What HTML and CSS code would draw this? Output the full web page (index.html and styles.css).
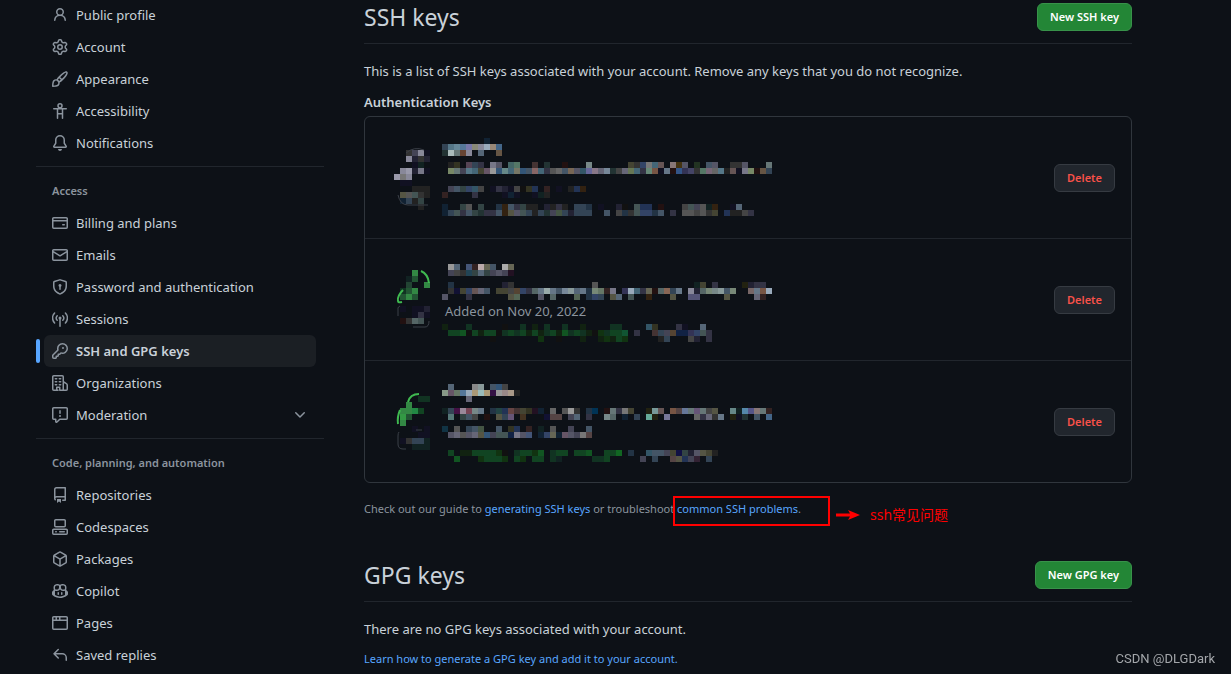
FILE: index.html
```
<!DOCTYPE html>
<html lang="en">
<head>
    <meta charset="UTF-8">
    <meta name="viewport" content="width=device-width, initial-scale=1.0">
    <title>SSH and GPG keys</title>
    <link rel="stylesheet" href="styles.css">
</head>
<body>

    <div class="layout">
        <nav class="sidebar" aria-label="User settings">
            <ul class="nav-list">
                <li><a href="#" class="nav-link">
                    <svg class="icon" viewBox="0 0 16 16"><path d="M10.561 8.073a6.005 6.005 0 0 1 3.432 5.142.75.75 0 1 1-1.498.07 4.5 4.5 0 0 0-8.99 0 .75.75 0 0 1-1.498-.07 6.004 6.004 0 0 1 3.431-5.142 3.999 3.999 0 1 1 5.123 0ZM10.5 5a2.5 2.5 0 1 0-5 0 2.5 2.5 0 0 0 5 0Z"/></svg>
                    <span>Public profile</span></a></li>
                <li><a href="#" class="nav-link">
                    <svg class="icon" viewBox="0 0 16 16"><path d="M8 0a8.2 8.2 0 0 1 .701.031C9.444.095 9.99.645 10.16 1.29l.288 1.107c.018.066.079.158.212.224.231.114.454.243.668.386.123.082.233.09.299.071l1.103-.303c.644-.176 1.392.021 1.82.63.27.385.506.792.704 1.218.315.675.111 1.422-.364 1.891l-.814.806c-.049.048-.098.147-.088.294.016.257.016.515 0 .772-.01.147.038.246.088.294l.814.806c.475.469.679 1.216.364 1.891a7.977 7.977 0 0 1-.704 1.217c-.428.61-1.176.807-1.82.63l-1.102-.302c-.067-.019-.177-.011-.3.071a5.909 5.909 0 0 1-.668.386c-.133.066-.194.158-.211.224l-.29 1.106c-.168.646-.715 1.196-1.458 1.26a8.006 8.006 0 0 1-1.402 0c-.743-.064-1.289-.614-1.458-1.26l-.289-1.106c-.018-.066-.079-.158-.212-.224a5.738 5.738 0 0 1-.668-.386c-.123-.082-.233-.09-.299-.071l-1.103.303c-.644.176-1.392-.021-1.82-.63a8.12 8.12 0 0 1-.704-1.218c-.315-.675-.111-1.422.363-1.891l.815-.806c.05-.048.098-.147.088-.294a6.214 6.214 0 0 1 0-.772c.01-.147-.038-.246-.088-.294l-.815-.806C.635 6.045.431 5.298.746 4.623a7.92 7.92 0 0 1 .704-1.217c.428-.61 1.176-.807 1.82-.63l1.102.302c.067.019.177.011.3-.071.214-.143.437-.272.668-.386.133-.066.194-.158.211-.224l.29-1.106C6.009.645 6.556.095 7.299.03 7.53.01 7.764 0 8 0Zm-.571 1.525c-.036.003-.108.036-.137.146l-.289 1.105c-.147.561-.549.967-.998 1.189-.173.086-.34.183-.5.29-.417.278-.97.423-1.529.27l-1.103-.303c-.109-.03-.175.016-.195.045-.22.312-.412.644-.573.99-.014.031-.021.11.059.19l.815.806c.411.406.562.957.53 1.456a4.709 4.709 0 0 0 0 .582c.032.499-.119 1.05-.53 1.456l-.815.806c-.081.08-.073.159-.059.19.162.346.353.677.573.989.02.03.085.076.195.046l1.102-.303c.56-.153 1.113-.008 1.53.27.161.107.328.204.501.29.447.222.85.629.997 1.189l.289 1.105c.029.109.101.143.137.146a6.6 6.6 0 0 0 1.142 0c.036-.003.108-.036.137-.146l.289-1.105c.147-.561.549-.967.998-1.189.173-.086.34-.183.5-.29.417-.278.97-.423 1.529-.27l1.103.303c.109.029.175-.016.195-.045.22-.313.411-.644.573-.99.014-.031.021-.11-.059-.19l-.815-.806c-.411-.406-.562-.957-.53-1.456a4.709 4.709 0 0 0 0-.582c-.032-.499.119-1.05.53-1.456l.815-.806c.081-.08.073-.159.059-.19a6.464 6.464 0 0 0-.573-.989c-.02-.03-.085-.076-.195-.046l-1.102.303c-.56.153-1.113.008-1.53-.27a4.44 4.44 0 0 0-.501-.29c-.447-.222-.85-.629-.997-1.189l-.289-1.105c-.029-.11-.101-.143-.137-.146a6.6 6.6 0 0 0-1.142 0ZM11 8a3 3 0 1 1-6 0 3 3 0 0 1 6 0ZM9.5 8a1.5 1.5 0 1 0-3.001.001A1.5 1.5 0 0 0 9.5 8Z"/></svg>
                    <span>Account</span></a></li>
                <li><a href="#" class="nav-link">
                    <svg class="icon" viewBox="0 0 16 16"><path d="M11.134 1.535c.7-.509 1.416-.942 2.076-1.155.649-.21 1.463-.267 2.069.34.603.601.568 1.411.368 2.07-.202.668-.624 1.39-1.125 2.096-1.011 1.424-2.496 2.987-3.775 4.249-1.098 1.084-2.132 1.839-3.04 2.3a3.744 3.744 0 0 1-1.055 3.217c-.431.431-1.065.691-1.657.861-.614.177-1.294.287-1.914.357A21.151 21.151 0 0 1 .797 16H.743a.75.75 0 0 1-.743-.742v-.054a21.25 21.25 0 0 1 .13-2.284c.067-.647.187-1.287.358-1.914.17-.591.43-1.226.86-1.657a3.746 3.746 0 0 1 3.227-1.054c.466-.893 1.225-1.907 2.314-2.982 1.271-1.255 2.833-2.75 4.245-3.777ZM1.62 13.089c-.051.464-.086.929-.104 1.395.466-.018.932-.053 1.396-.104a10.511 10.511 0 0 0 1.668-.309c.526-.151.856-.325 1.011-.48a2.25 2.25 0 1 0-3.182-3.182c-.155.155-.329.485-.48 1.01a10.515 10.515 0 0 0-.309 1.67Zm10.396-10.34c-1.224.89-2.605 2.189-3.822 3.384l1.718 1.718c1.21-1.205 2.51-2.597 3.387-3.833.47-.662.78-1.227.912-1.662.134-.444.032-.551.009-.575h-.001V1.78c-.014-.014-.113-.113-.548.027-.432.14-.995.462-1.655.942Zm-4.832 7.266-.001.001a9.859 9.859 0 0 0 1.63-1.142L7.155 7.216a9.7 9.7 0 0 0-1.161 1.607c.482.302.889.71 1.19 1.192Z"/></svg>
                    <span>Appearance</span></a></li>
                <li><a href="#" class="nav-link">
                    <svg class="icon icon-line" viewBox="0 0 16 16"><circle cx="8" cy="2.75" r="2"/><path d="M1.75 5.75h12.5M5.5 5.75v9.5M10.5 5.75v9.5M5.5 10.75h5"/></svg>
                    <span>Accessibility</span></a></li>
                <li><a href="#" class="nav-link">
                    <svg class="icon" viewBox="0 0 16 16"><path d="M8 16a2 2 0 0 0 1.985-1.75c.017-.137-.097-.25-.235-.25h-3.5c-.138 0-.252.113-.235.25A2 2 0 0 0 8 16ZM3 5a5 5 0 0 1 10 0v2.947c0 .05.015.098.042.139l1.703 2.555A1.519 1.519 0 0 1 13.482 13H2.518a1.516 1.516 0 0 1-1.263-2.36l1.703-2.554A.255.255 0 0 0 3 7.947Zm5-3.5A3.5 3.5 0 0 0 4.5 5v2.947c0 .346-.102.683-.294.97l-1.703 2.556a.017.017 0 0 0-.003.01l.001.006c0 .002.002.004.004.006l.006.004.007.001h10.964l.007-.001.006-.004.004-.006.001-.007a.017.017 0 0 0-.003-.01l-1.703-2.554a1.745 1.745 0 0 1-.294-.97V5A3.5 3.5 0 0 0 8 1.5Z"/></svg>
                    <span>Notifications</span></a></li>
            </ul>

            <h2 class="nav-title">Access</h2>
            <ul class="nav-list">
                <li><a href="#" class="nav-link">
                    <svg class="icon" viewBox="0 0 16 16"><path d="M10.75 9a.75.75 0 0 0 0 1.5h1.5a.75.75 0 0 0 0-1.5h-1.5Z"/><path d="M0 3.75C0 2.784.784 2 1.75 2h12.5c.966 0 1.75.784 1.75 1.75v8.5A1.75 1.75 0 0 1 14.25 14H1.75A1.75 1.75 0 0 1 0 12.25ZM14.5 6.5h-13v5.75c0 .138.112.25.25.25h12.5a.25.25 0 0 0 .25-.25Zm0-2.75a.25.25 0 0 0-.25-.25H1.75a.25.25 0 0 0-.25.25V5h13Z"/></svg>
                    <span>Billing and plans</span></a></li>
                <li><a href="#" class="nav-link">
                    <svg class="icon" viewBox="0 0 16 16"><path d="M1.75 2h12.5c.966 0 1.75.784 1.75 1.75v8.5A1.75 1.75 0 0 1 14.25 14H1.75A1.75 1.75 0 0 1 0 12.25v-8.5C0 2.784.784 2 1.75 2ZM1.5 12.251c0 .138.112.25.25.25h12.5a.25.25 0 0 0 .25-.25V5.809L8.38 9.397a.75.75 0 0 1-.76 0L1.5 5.809v6.442Zm13-8.181v-.32a.25.25 0 0 0-.25-.25H1.75a.25.25 0 0 0-.25.25v.32L8 7.88Z"/></svg>
                    <span>Emails</span></a></li>
                <li><a href="#" class="nav-link">
                    <svg class="icon" viewBox="0 0 16 16"><path d="m8.533.133 5.25 1.68A1.75 1.75 0 0 1 15 3.48V7c0 1.566-.32 3.182-1.303 4.682-.983 1.498-2.585 2.813-5.032 3.855a1.697 1.697 0 0 1-1.33 0c-2.447-1.042-4.049-2.357-5.032-3.855C1.32 10.182 1 8.566 1 7V3.48a1.755 1.755 0 0 1 1.217-1.667l5.25-1.68a1.748 1.748 0 0 1 1.066 0Zm-.61 1.429.001.001-5.25 1.68a.251.251 0 0 0-.174.237V7c0 1.36.275 2.666 1.057 3.859.784 1.194 2.121 2.342 4.366 3.298a.196.196 0 0 0 .154 0c2.245-.957 3.582-2.103 4.366-3.297C13.225 9.666 13.5 8.358 13.5 7V3.48a.25.25 0 0 0-.174-.238l-5.25-1.68a.25.25 0 0 0-.153 0ZM9.5 6.5c0 .536-.286 1.032-.75 1.3v2.45a.75.75 0 0 1-1.5 0V7.8A1.5 1.5 0 1 1 9.5 6.5Z"/></svg>
                    <span>Password and authentication</span></a></li>
                <li><a href="#" class="nav-link">
                    <svg class="icon icon-line" viewBox="0 0 16 16"><path d="M8 7.5v7.75M5.2 9.3a3.4 3.4 0 0 1 0-4.6M10.8 9.3a3.4 3.4 0 0 0 0-4.6M2.6 12a7.2 7.2 0 0 1 0-10M13.4 12a7.2 7.2 0 0 0 0-10"/><circle class="dot" cx="8" cy="7" r="1.5"/></svg>
                    <span>Sessions</span></a></li>
                <li class="current"><a href="#" class="nav-link" aria-current="page">
                    <svg class="icon" viewBox="0 0 16 16"><path d="M10.5 0a5.499 5.499 0 1 1-1.288 10.848l-.932.932a.749.749 0 0 1-.53.22H7v.75a.749.749 0 0 1-.22.53l-.5.5a.749.749 0 0 1-.53.22H5v.75a.749.749 0 0 1-.22.53l-.5.5a.749.749 0 0 1-.53.22h-2A1.75 1.75 0 0 1 0 14.25v-2c0-.199.079-.389.22-.53l4.932-4.932A5.5 5.5 0 0 1 10.5 0Zm-4 5.5c-.001.431.069.86.205 1.269a.75.75 0 0 1-.181.768L1.5 12.56v1.69c0 .138.112.25.25.25h1.69l.06-.06v-1.19a.75.75 0 0 1 .75-.75h1.19l.06-.06v-1.19a.75.75 0 0 1 .75-.75h1.19l1.023-1.025a.75.75 0 0 1 .768-.18A4 4 0 1 0 6.5 5.5ZM11 6a1 1 0 1 1 0-2 1 1 0 0 1 0 2Z"/></svg>
                    <span>SSH and GPG keys</span></a></li>
                <li><a href="#" class="nav-link">
                    <svg class="icon icon-line" viewBox="0 0 16 16"><path d="M6 15.25H1.75a1 1 0 0 1-1-1V1.75a1 1 0 0 1 1-1h8.5a1 1 0 0 1 1 1v13.5H8M4.75 15.25v-3h3v3M11.25 6.75l2.8 1.6q1.2.6 1.2 1.6v4.3a1 1 0 0 1-1 1h-3"/><path d="M3.3 3.75h1.4M7.3 3.75h1.4M3.3 6.75h1.4M7.3 6.75h1.4M3.3 9.75h1.4M7.3 9.75h1.4"/></svg>
                    <span>Organizations</span></a></li>
                <li><a href="#" class="nav-link">
                    <svg class="icon" viewBox="0 0 16 16"><path d="M0 1.75C0 .784.784 0 1.75 0h12.5C15.216 0 16 .784 16 1.75v9.5A1.75 1.75 0 0 1 14.25 13H8.06l-2.573 2.573A1.458 1.458 0 0 1 3 14.543V13H1.75A1.75 1.75 0 0 1 0 11.25Zm1.75-.25a.25.25 0 0 0-.25.25v9.5c0 .138.112.25.25.25h2a.75.75 0 0 1 .75.75v2.19l2.72-2.72a.749.749 0 0 1 .53-.22h6.5a.25.25 0 0 0 .25-.25v-9.5a.25.25 0 0 0-.25-.25Zm7 2.25v2.5a.75.75 0 0 1-1.5 0v-2.5a.75.75 0 0 1 1.5 0ZM9 9a1 1 0 1 1-2 0 1 1 0 0 1 2 0Z"/></svg>
                    <span>Moderation</span>
                    <svg class="icon chevron" viewBox="0 0 16 16"><path d="M12.78 5.22a.749.749 0 0 1 0 1.06l-4.25 4.25a.749.749 0 0 1-1.06 0L3.22 6.28a.749.749 0 1 1 1.06-1.06L8 8.939l3.72-3.719a.749.749 0 0 1 1.06 0Z"/></svg></a></li>
            </ul>

            <h2 class="nav-title">Code, planning, and automation</h2>
            <ul class="nav-list">
                <li><a href="#" class="nav-link">
                    <svg class="icon" viewBox="0 0 16 16"><path d="M2 2.5A2.5 2.5 0 0 1 4.5 0h8.75a.75.75 0 0 1 .75.75v12.5a.75.75 0 0 1-.75.75h-2.5a.75.75 0 0 1 0-1.5h1.75v-2h-8a1 1 0 0 0-.714 1.7.75.75 0 1 1-1.072 1.05A2.495 2.495 0 0 1 2 11.5Zm10.5-1h-8a1 1 0 0 0-1 1v6.708A2.486 2.486 0 0 1 4.5 9h8ZM5 12.25a.25.25 0 0 1 .25-.25h3.5a.25.25 0 0 1 .25.25v3.25a.25.25 0 0 1-.4.2l-1.45-1.087a.249.249 0 0 0-.3 0L5.4 15.7a.25.25 0 0 1-.4-.2Z"/></svg>
                    <span>Repositories</span></a></li>
                <li><a href="#" class="nav-link">
                    <svg class="icon" viewBox="0 0 16 16"><path d="M0 11.25c0-.966.784-1.75 1.75-1.75h12.5c.966 0 1.75.784 1.75 1.75v3A1.75 1.75 0 0 1 14.25 16H1.75A1.75 1.75 0 0 1 0 14.25Zm2-9.5C2 .784 2.784 0 3.75 0h8.5C13.216 0 14 .784 14 1.75v5a1.75 1.75 0 0 1-1.75 1.75h-8.5A1.75 1.75 0 0 1 2 6.75Zm1.75-.25a.25.25 0 0 0-.25.25v5c0 .138.112.25.25.25h8.5a.25.25 0 0 0 .25-.25v-5a.25.25 0 0 0-.25-.25Zm-2 9.5a.25.25 0 0 0-.25.25v3c0 .138.112.25.25.25h12.5a.25.25 0 0 0 .25-.25v-3a.25.25 0 0 0-.25-.25Z"/><path d="M7 12.75a.75.75 0 0 1 .75-.75h4.5a.75.75 0 0 1 0 1.5h-4.5a.75.75 0 0 1-.75-.75Zm-4 0a.75.75 0 0 1 .75-.75h.5a.75.75 0 0 1 0 1.5h-.5a.75.75 0 0 1-.75-.75Z"/></svg>
                    <span>Codespaces</span></a></li>
                <li><a href="#" class="nav-link">
                    <svg class="icon" viewBox="0 0 16 16"><path d="m8.878.392 5.25 3.045c.54.314.872.89.872 1.514v6.098a1.75 1.75 0 0 1-.872 1.514l-5.25 3.045a1.75 1.75 0 0 1-1.756 0l-5.25-3.045A1.75 1.75 0 0 1 1 11.049V4.951c0-.624.332-1.201.872-1.514L7.122.392a1.75 1.75 0 0 1 1.756 0ZM7.875 1.69l-4.63 2.685L8 7.133l4.755-2.758-4.63-2.685a.248.248 0 0 0-.25 0ZM2.5 5.677v5.372c0 .09.047.171.125.216l4.625 2.683V8.432Zm6.25 8.271 4.625-2.683a.25.25 0 0 0 .125-.216V5.677L8.75 8.432Z"/></svg>
                    <span>Packages</span></a></li>
                <li><a href="#" class="nav-link">
                    <svg class="icon" viewBox="0 0 16 16"><path d="M7.998 15.035c-4.562 0-7.873-2.914-7.998-3.749V9.338c.085-.628.677-1.686 1.588-2.065.013-.07.024-.143.036-.218.029-.183.06-.384.126-.612-.201-.508-.254-1.084-.254-1.656 0-.87.128-1.769.693-2.484.579-.733 1.494-1.124 2.724-1.261 1.206-.134 2.262.034 2.944.765.05.053.096.108.139.165.044-.057.094-.112.143-.165.682-.731 1.738-.899 2.944-.765 1.23.137 2.145.528 2.724 1.261.566.715.693 1.614.693 2.484 0 .572-.053 1.148-.254 1.656.066.228.098.429.126.612.012.076.024.148.037.218.924.385 1.522 1.471 1.591 2.095v1.872c0 .766-3.351 3.795-8.002 3.795Zm0-1.485c2.28 0 4.584-1.11 5.002-1.433V7.862l-.023-.116c-.49.21-1.075.291-1.727.291-1.146 0-2.059-.327-2.71-.991A3.222 3.222 0 0 1 8 6.303a3.24 3.24 0 0 1-.544.743c-.65.664-1.563.991-2.71.991-.652 0-1.236-.081-1.727-.291l-.023.116v4.255c.419.323 2.722 1.433 5.002 1.433ZM6.762 2.83c-.193-.206-.637-.413-1.682-.297-1.019.113-1.479.404-1.713.7-.247.312-.369.789-.369 1.554 0 .793.129 1.171.308 1.371.162.181.519.379 1.442.379.853 0 1.339-.235 1.638-.54.315-.322.527-.827.617-1.553.117-.935-.037-1.395-.241-1.614Zm4.155-.297c-1.044-.116-1.488.091-1.681.297-.204.219-.359.679-.242 1.614.091.726.303 1.231.618 1.553.299.305.784.54 1.638.54.922 0 1.28-.198 1.442-.379.179-.2.308-.578.308-1.371 0-.765-.123-1.242-.37-1.554-.233-.296-.693-.587-1.713-.7Z"/><path d="M6.25 9.037a.75.75 0 0 1 .75.75v1.501a.75.75 0 0 1-1.5 0V9.787a.75.75 0 0 1 .75-.75Zm4.25.75v1.501a.75.75 0 0 1-1.5 0V9.787a.75.75 0 0 1 1.5 0Z"/></svg>
                    <span>Copilot</span></a></li>
                <li><a href="#" class="nav-link">
                    <svg class="icon" viewBox="0 0 16 16"><path d="M0 2.75C0 1.784.784 1 1.75 1h12.5c.966 0 1.75.784 1.75 1.75v10.5A1.75 1.75 0 0 1 14.25 15H1.75A1.75 1.75 0 0 1 0 13.25ZM14.5 6h-13v7.25c0 .138.112.25.25.25h12.5a.25.25 0 0 0 .25-.25Zm-6-3.5v2h6V2.75a.25.25 0 0 0-.25-.25ZM5 2.5v2h2v-2Zm-3.25 0a.25.25 0 0 0-.25.25V4.5h2v-2Z"/></svg>
                    <span>Pages</span></a></li>
                <li><a href="#" class="nav-link">
                    <svg class="icon" viewBox="0 0 16 16"><path d="M6.78 1.97a.75.75 0 0 1 0 1.06L3.81 6h6.44A4.75 4.75 0 0 1 15 10.75v2.5a.75.75 0 0 1-1.5 0v-2.5a3.25 3.25 0 0 0-3.25-3.25H3.81l2.97 2.97a.749.749 0 0 1-.326 1.275.749.749 0 0 1-.734-.215L1.47 7.28a.75.75 0 0 1 0-1.06l4.25-4.25a.75.75 0 0 1 1.06 0Z"/></svg>
                    <span>Saved replies</span></a></li>
            </ul>
        </nav>

        <main class="content">
            <section>
                <div class="subhead">
                    <h1>SSH keys</h1>
                    <button type="button" class="btn btn-primary">New SSH key</button>
                </div>
                <p class="text">This is a list of SSH keys associated with your account. Remove any keys that you do not recognize.</p>
                <h3 class="list-title">Authentication Keys</h3>
                <ul class="key-list">
                    <li class="key">
                        <div class="key-info">
                            <svg class="mosaic" id="key1" viewBox="0 0 384 91">
                                <g class="cells"></g>
                                <path class="gray" d="M12 21Q20 14 30 18M4 63Q6 73 14 73H34"/>
                            </svg>
                        </div>
                        <button type="button" class="btn btn-danger">Delete</button>
                    </li>
                    <li class="key">
                        <div class="key-info">
                            <svg class="mosaic" id="key2" viewBox="0 2 384 91">
                                <g class="cells"></g>
                                <path class="green" d="M27 19Q34 22 35 31M9 38Q3 44 4 49Q4 51 8 50"/>
                                <path class="gray" d="M4 64V56Q4 55 6 54M19 75H31Q35 75 35 69"/>
                            </svg>
                            <span class="added">Added on Nov 20, 2022</span>
                        </div>
                        <button type="button" class="btn btn-danger">Delete</button>
                    </li>
                    <li class="key">
                        <div class="key-info">
                            <svg class="mosaic" id="key3" viewBox="0 4 384 91">
                                <g class="cells"></g>
                                <path class="green" d="M25 22Q16 22 14 30M6 38Q3 45 4 52"/>
                                <path class="gray" d="M5 60Q4 61 4 64V72Q4 77 9 77H12M22 58H28"/>
                            </svg>
                        </div>
                        <button type="button" class="btn btn-danger">Delete</button>
                    </li>
                </ul>
                <p class="help">
                    Check out our guide to <a href="#">generating SSH keys</a> or troubleshoot <a href="#">common SSH problems</a>.
                    <span class="callout"></span>
                    <span class="callout-note" lang="zh">
                        <svg class="arrow" viewBox="0 0 24 12"><path d="M0 4.6h14L12 1l12 5-12 5 2-3.6H0Z"/></svg>
                        ssh常见问题
                    </span>
                </p>
            </section>

            <section class="gpg">
                <div class="subhead">
                    <h1>GPG keys</h1>
                    <button type="button" class="btn btn-primary">New GPG key</button>
                </div>
                <p class="text">There are no GPG keys associated with your account.</p>
                <p class="learn">Learn how to <a href="#">generate a GPG key and add it to your account</a>.</p>
            </section>
        </main>
    </div>

    <div class="watermark">CSDN @DLGDark</div>

    <script src="mosaic.js"></script>
</body>
</html>
```

FILE: styles.css
```
* {
    box-sizing: border-box;
}
body {
    margin: 0;
    background-color: #0d1117;
    color: #c9d1d9;
    font-family: "Segoe UI", "Noto Sans", "Noto Sans CJK SC", sans-serif;
    font-size: 13px;
    line-height: 22px;
    overflow: hidden;
}
h1, h2, h3, p, ul {
    margin: 0;
    padding: 0;
}
ul {
    list-style: none;
}
a {
    color: #58a6ff;
    text-decoration: none;
}
a:hover {
    text-decoration: underline;
}
.layout {
    display: flex;
    gap: 40px;
    margin-top: -1px;
    padding: 0 99px 0 36px;
}

/* sidebar */
.sidebar {
    flex: 0 0 288px;
}
.nav-list {
    padding: 0 8px;
}
.nav-list li {
    position: relative;
}
.nav-link {
    display: flex;
    align-items: center;
    gap: 8px;
    height: 32px;
    padding: 0 8px;
    border-radius: 6px;
    color: #c9d1d9;
}
.current .nav-link {
    background-color: #1b1f24;
    font-weight: 600;
}
.current::before {
    content: "";
    position: absolute;
    left: -8px;
    top: 4px;
    width: 4px;
    height: 24px;
    border-radius: 6px;
    background-color: #58a6ff;
}
.nav-title {
    margin-top: 7px;
    padding: 8px 16px 0;
    border-top: 1px solid #21262d;
    color: #8b949e;
    font-size: 11px;
    font-weight: 600;
    line-height: 32px;
}
.icon {
    flex: none;
    width: 16px;
    height: 16px;
    fill: #8b949e;
}
.icon-line {
    fill: none;
    stroke: #8b949e;
    stroke-width: 1.5;
    stroke-linecap: round;
    stroke-linejoin: round;
}
.dot {
    fill: #8b949e;
    stroke: none;
}
.chevron {
    margin-left: auto;
}

/* main column */
.content {
    flex: 1;
    min-width: 0;
}
.subhead {
    display: flex;
    justify-content: space-between;
    align-items: center;
    padding: 4px 0 12px;
    border-bottom: 1px solid #21262d;
}
.subhead h1 {
    font-size: 23px;
    font-weight: 400;
    line-height: 28px;
}
.text {
    margin-top: 16px;
}
.list-title {
    margin: 9px 0 3px;
    font-size: 13px;
    font-weight: 600;
}
.btn {
    height: 28px;
    padding: 0 12px;
    border: 1px solid #363b42;
    border-radius: 6px;
    font-family: inherit;
    font-size: 11px;
    font-weight: 600;
    line-height: 20px;
    cursor: pointer;
}
.btn-primary {
    background-color: #238636;
    border-color: #38924a;
    color: #fff;
}
.btn-primary:hover {
    background-color: #2ea043;
}
.btn-danger {
    background-color: #21262d;
    color: #f85149;
}
.key-list {
    border: 1px solid #30363d;
    border-radius: 6px;
}
.key {
    display: flex;
    justify-content: space-between;
    align-items: center;
    padding: 15px 16px 15px 29px;
}
.key + .key {
    border-top: 1px solid #21262d;
}
.key-info {
    position: relative;
}
.mosaic {
    display: block;
    width: 384px;
    height: 91px;
    fill: none;
}
.cells {
    shape-rendering: crispEdges;
}
.gray {
    stroke: #3b4048;
}
.green {
    stroke: #3fb950;
    stroke-width: 2;
}
.added {
    position: absolute;
    left: 51px;
    top: 46px;
    color: #8b949e;
}
.help,
.learn {
    color: #8b949e;
    font-size: 11px;
    line-height: 18px;
}
.help {
    position: relative;
    margin-top: 17px;
}
.learn {
    margin-top: 10px;
}
.learn a,
.learn {
    color: #58a6ff;
}

/* red mark over the help line */
.callout {
    position: absolute;
    left: 309px;
    top: -4px;
    width: 157px;
    height: 30px;
    border: 2px solid #f00;
}
.callout-note {
    position: absolute;
    left: 472px;
    top: 5px;
    display: flex;
    align-items: center;
    gap: 10px;
    color: #f00;
    font-size: 14px;
    line-height: 20px;
}
.arrow {
    width: 24px;
    height: 12px;
    fill: #f00;
}
.gpg {
    margin-top: 39px;
}
.watermark {
    position: fixed;
    right: 16px;
    bottom: 5px;
    color: #a3a6aa;
    font-family: Roboto, sans-serif;
    font-size: 13px;
    line-height: 20px;
}
```

FILE: mosaic.js
```
// Blurred key details, drawn as 6px cells.
// Each line: [row, first column, colours], "_n" skips n cells.
const CELL = 6;

const mosaics = {
    key1: [
        [3, 2, "333 445 889 112"],
        [4, 2, "889 223 333 223"],
        [5, 3, "112 122"],
        [6, 1, "889 99a 223 778 112"],
        [7, 0, "99a 777 889"],
        [8, 1, "112 112"],
        [9, 3, "222 222 222"],
        [10, 1, "554 555 455 333 222"],
        [11, 1, "123 345 222 344"],
        [12, 4, "222"],
        [1, 15, "123"],
        [2, 8, "345 578 689 579 77a 887 889 9ab 987 468"],
        [3, 8, "233 abb 677 643 889 _1 567 _2 654"],
        [5, 9, "222 332 _1 545 345 334 _1 778 556 _1 466 576 _2 433 _1 233 _2 211 _3 788 _6 443 333 346 777 467 655 _1 877 431 556 _1 232 _1 456 556 _2 333 333 556 _3 677"],
        [6, 9, "786 677 445 578 467 443 656 999 357 688 467 776 357 456 866 467 334 555 666 456 765 556 356 669 878 667 789 233 444 667 675 467 334 687 754 112 678 211 358 335 446 333 576 767 666 578 222 655 112 778 786 211 654 345"],
        [9, 9, "445 456 344 346 356 444 _1 112 334 223 112 444 111 332 235 _1 322 _1 112 _1 222 235 321"],
        [10, 8, "322 _4 334 _4 112 123 112 _2 112 122 222"],
        [12, 8, "123 _2 344 555 _1 344 _2 234 321 456 334 344 222 222 _1 223 222 334 222 _1 345 345 234 _1 112 _2 223 111 _1 455 235 235 _1 211 _3 444 455 445 555 122 321 _2 112 567"],
        [13, 8, "123 345 455 334 456 344 233 334 334 456 321 554 556 455 345 222 345 233 445 454 345 223 345 345 345 _2 456 _1 444 234 333 455 346 346 234 456 _1 334 _1 555 555 444 555 333 443 _1 235 222 222 444 334"]
    ],
    key2: [
        [3, 3, "384"],
        [4, 2, "122 253"],
        [5, 2, "243 _2 384"],
        [6, 1, "132 253 384"],
        [7, 1, "253 384 253"],
        [9, 1, "112 _1 112 112 223"],
        [10, 3, "112 334 112"],
        [11, 1, "211 333 566 455"],
        [2, 9, "999 567 _1 457 322 baa 665 456 _1 aaa 665"],
        [3, 9, "445 444 333 245 344 567 344 445 556 445 212"],
        [5, 9, "234 _8 223 333 _13 555 _16 122 443 _1 334 _4 221 223 334 334"],
        [6, 9, "333 113 443 346 655 667 456 _1 443 443 444 543 346 334 566 678 9aa 678 456 789 899 567 678 234 787 676 322 778 _1 335 9ab 467 334 665 211 566 865 345 678 _1 889 223 566 787 788 899 456 787 _2 766 678 754 9ab"],
        [7, 8, "556 _3 334 _6 554 565 _3 556 _1 566 _3 565 _1 234 346 345 _1 554 567 _1 455 _2 321 _3 554 _2 557 557 _4 554 _4 667 322"],
        [12, 8, "121 _3 132 _5 111 _2 132 _1 121 _1 132 _2 132 _2 121 _4 132 132 _4 356 332 _3 334 112 _2 567"],
        [13, 9, "142 142 152 111 142 121 142 142 111 132 142 132 142 121 142 121 132 142 121 152 132 142 132 121 111 131 132 142 142 153 _1 334 _2 433 345 445 543 124 124 335 346 455 334"],
        [14, 16, "111 _7 131 _2 111 _3 121 _2 121 131 121 142 131 _5 222 345 _3 444 223 _1 334"]
    ],
    key3: [
        [4, 4, "132 132"],
        [5, 2, "384"],
        [6, 1, "384 384 284 142"],
        [7, 1, "394 253"],
        [8, 1, "384"],
        [9, 3, "112 _1 112"],
        [10, 4, "112 112"],
        [11, 1, "112 333 345 345 122"],
        [12, 3, "122 122 122"],
        [2, 9, "567 _3 888 899 _1 456 357 444"],
        [3, 8, "898 656 676 579 9ab a97 9bb a97 314 999 988 a98 222"],
        [4, 12, "667"],
        [6, 8, "122 345 414 989 745 788 678 _1 234 244 235 644 433 443 332 212 123 _1 666 _1 555 999 333 _1 234 035 _1 211 677 334 777 443 _2 221 799 655 _1 754 544 679 677 657 677 444 554 _2 688 122 58a 558 877 677 322"],
        [7, 9, "577 _1 344 456 444 _1 211 _1 554 345 657 _1 432 _3 113 544 544 _1 445 567 _1 334 _2 788 566 _1 123 _1 345 _1 6a9 221 _1 779 _4 666 334 667 333 678 _1 221 112 233 _1 456 _1 468"],
        [9, 8, "134 _1 555 _1 345 456 454 _2 456 _1 332 235 _1 322 _1 122 _1 555 _2 445 _2 456"],
        [10, 9, "556 667 555 556 667 554 357 445 455 455 124 778 556 457 _1 123 346 665 123 656 556 445 777 544"],
        [13, 9, "142 _1 121 121 142 142 142 142 131 111 _1 132 142 142 131 152 _1 132 142 142 _1 142 142 152 _2 142 142 162 _1 234 _2 356 456 456 445 443 114 344 223 556 554 443 222"],
        [14, 10, "152 _3 131 142 142 142 131 _1 142 131 _1 142 142 _1 132 122 _5 132 132 142 _5 445 _1 345 _2 544 554 235 445 323 _1 345"]
    ]
};

Object.keys(mosaics).forEach(id => {
    const group = document.querySelector("#" + id + " .cells");
    let rects = "";

    mosaics[id].forEach(([row, start, colours]) => {
        let col = start;
        colours.split(" ").forEach(token => {
            if (token[0] === "_") {
                col += Number(token.slice(1));
                return;
            }
            rects += `<rect x="${col * CELL}" y="${row * CELL}" width="${CELL}" height="${CELL}" fill="#${token}"/>`;
            col++;
        });
    });

    group.innerHTML = rects;
});
```
